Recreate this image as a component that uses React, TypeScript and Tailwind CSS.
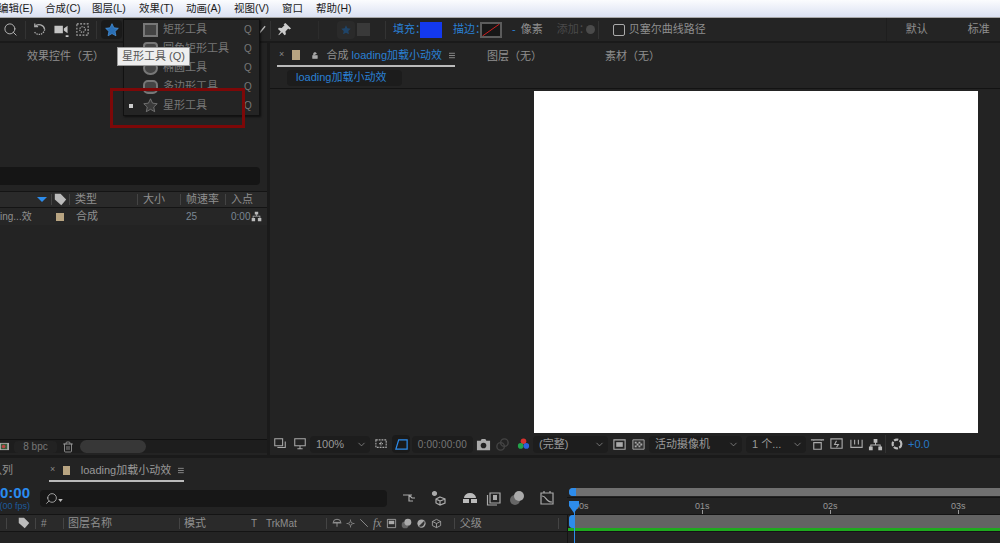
import type { ReactNode } from 'react';
import { ChevronDown, Search, Trash2 } from 'lucide-react';

const menus = [
  { label: '编辑(E)', w: 'w-[47px]' },
  { label: '合成(C)', w: 'w-[47px]' },
  { label: '图层(L)', w: 'w-[47px]' },
  { label: '效果(T)', w: 'w-[47px]' },
  { label: '动画(A)', w: 'w-[48px]' },
  { label: '视图(V)', w: 'w-[48px]' },
  { label: '窗口', w: 'w-[34px]' },
  { label: '帮助(H)', w: 'w-[48px]' },
];

const shapeItems = ['矩形工具', '圆角矩形工具', '椭圆工具', '多边形工具', '星形工具'];

const starPath = 'M12 2.5l2.9 6.2 6.6.8-4.9 4.6 1.3 6.6L12 17.4l-5.9 3.3 1.3-6.6-4.9-4.6 6.6-.8z';

function Star({ className }: { className: string }) {
  return (
    <svg viewBox="0 0 24 24" className={className}>
      <path d={starPath} />
    </svg>
  );
}

function Icon({ className, children }: { className: string; children: ReactNode }) {
  return (
    <svg viewBox="0 0 16 16" fill="none" stroke="#aaa" strokeWidth="1.2" className={`shrink-0 ${className}`}>
      {children}
    </svg>
  );
}

function Select({ label, className }: { label: string; className: string }) {
  return (
    <div className={`flex h-[17px] shrink-0 items-center justify-between rounded-sm bg-[#1d1d1d] pl-[6px] pr-[3px] text-[#9a9a9a] ${className}`}>
      <span className="whitespace-nowrap">{label}</span>
      <ChevronDown className="h-[11px] w-[11px]" strokeWidth={1.5} />
    </div>
  );
}

function HamburgerIcon({ className }: { className: string }) {
  return (
    <svg viewBox="0 0 8 7" className={`h-[7px] w-[8px] ${className}`}>
      <path d="M0 .5h8M0 3.5h8M0 6.5h8" stroke="#aaa" />
    </svg>
  );
}

function CompBar() {
  return (
    <div className="flex h-[22px] shrink-0 items-center bg-[#232323] text-[11px]">
      <Icon className="ml-[3px] h-[14px] w-[14px]"><path d="M2 2h9v8H2zM5 12h9V5" /></Icon>
      <Icon className="ml-[6px] h-[14px] w-[14px]"><path d="M2 2h12v8H2zM8 10v3M5 13.5h6" /></Icon>
      <Select label="100%" className="ml-[3px] w-[60px]" />
      <Icon className="ml-[4px] h-[15px] w-[15px]"><path d="M2 3h11v8H2zM7.5 5v4M5.5 7h4" strokeDasharray="2 1" /></Icon>
      <div className="ml-[3px] flex h-[18px] w-[18px] items-center justify-center rounded-sm bg-[#1a1a1a]">
        <svg viewBox="0 0 16 16" fill="none" stroke="#2d8ceb" strokeWidth="1.3" className="h-[15px] w-[15px]"><path d="M2 13L5 3h9v10z" /></svg>
      </div>
      <div className="ml-[2px] flex h-[17px] w-[61px] items-center justify-center rounded-sm bg-[#1d1d1d] text-[10px] tracking-[0.2px] text-[#777]">0:00:00:00</div>
      <svg viewBox="0 0 16 16" className="ml-[3px] h-[15px] w-[15px]"><path fill="#aaa" d="M1 4h4l1-2h4l1 2h4v10H1z" /><circle cx="8" cy="9" r="3" fill="#222" /></svg>
      <svg viewBox="0 0 16 16" className="ml-[4px] h-[15px] w-[15px]"><circle cx="6" cy="10" r="4" fill="none" stroke="#444" strokeWidth="1.5" /><circle cx="10" cy="6" r="4" fill="none" stroke="#444" strokeWidth="1.5" /></svg>
      <svg viewBox="0 0 16 16" className="ml-[6px] h-[15px] w-[15px]"><circle cx="8" cy="4.5" r="3" fill="#d8322e" /><circle cx="5" cy="9.5" r="3" fill="#22a34a" /><circle cx="11" cy="9.5" r="3" fill="#2c62dc" /></svg>
      <Select label="(完整)" className="ml-[2px] w-[75px]" />
      <Icon className="ml-[4px] h-[15px] w-[15px]"><path d="M2 3h12v10H2z" /><path d="M4.5 5.5h7v5h-7z" fill="#aaa" stroke="none" /></Icon>
      <svg viewBox="0 0 16 16" className="ml-[4px] h-[15px] w-[15px]"><path d="M2 3h12v10H2z" fill="#333" stroke="#aaa" /><path d="M4 5h2v2H4zM8 5h2v2H8zM6 7h2v2H6zM10 7h2v2h-2zM4 9h2v2H4zM8 9h2v2H8z" fill="#aaa" /></svg>
      <Select label="活动摄像机" className="ml-[3px] w-[93px]" />
      <Select label="1 个..." className="ml-[4px] w-[60px]" />
      <Icon className="ml-[4px] h-[15px] w-[15px]"><path d="M1 3h14M4 3v1M12 3v1M4 6h8v7H4z" /></Icon>
      <Icon className="ml-[4px] h-[15px] w-[15px]"><path d="M2 2h12v10H2zM8 4L6 8h4l-2 3" /></Icon>
      <Icon className="ml-[5px] h-[15px] w-[15px]"><path d="M2 3v8h12V3M6 3v5M10 3v5M2 11h12" /></Icon>
      <svg viewBox="0 0 16 16" fill="#bbb" className="ml-[4px] h-[15px] w-[15px]"><path d="M6 2h4v4H6zM1 10h4v4H1zM11 10h4v4h-4zM7.5 6h1v2h5v2h-1V9h-9v1h-1V8h5z" /></svg>
      <div className="ml-[2px] h-[18px] w-px bg-[#333]" />
      <svg viewBox="0 0 16 16" fill="none" stroke="#bbb" strokeWidth="2.5" className="ml-[4px] h-[14px] w-[14px]"><circle cx="8" cy="8" r="5" strokeDasharray="5 1.5" /></svg>
      <span className="ml-[4px] text-[#2578c8]">+0.0</span>
    </div>
  );
}

export default function App() {
  return (
    <div className="relative flex h-[543px] w-[1000px] flex-col overflow-hidden bg-[#1a1a1a] font-['Liberation_Sans','Noto_Sans_CJK_SC',sans-serif] text-[11px] text-[#8f8f8f]">
      {/* menu */}
      <div className="flex h-[18px] shrink-0 items-center border-b border-[#a8a8a8] bg-gradient-to-b from-[#fbfcfe] to-[#dbe1f2] text-[10.5px] text-[#1a1a1a]">
        <div className="-ml-[2px] flex">
          {menus.map((m) => (
            <span key={m.label} className={`whitespace-nowrap ${m.w}`}>{m.label}</span>
          ))}
        </div>
      </div>

      {/* toolbar */}
      <div className="flex h-[23px] shrink-0 items-center bg-[#242424]">
        <Search className="ml-[3px] h-[15px] w-[15px] text-[#bbb]" strokeWidth={1.5} />
        <div className="ml-[7px] h-[18px] w-px bg-[#333]" />
        <Icon className="ml-[6px] h-[15px] w-[15px]">
          <path d="M3 5a6 6 0 0 1 10.5 3" strokeWidth="1.4" />
          <path d="M13.5 8a6 6 0 0 1-11 2.5" strokeWidth="1.4" strokeDasharray="1.5 1" />
          <path d="M3 1.5V5h3.5" strokeWidth="1.4" />
        </Icon>
        <svg viewBox="0 0 16 16" fill="#c4c4c4" className="ml-[6px] h-[15px] w-[16px]"><path d="M1 4h9v8H1zM11 7l4-3v8l-4-3zM13 14h3v2h-3z" /></svg>
        <Icon className="ml-[6px] h-[15px] w-[15px]"><path d="M2 2h12v12H2z" strokeDasharray="2 1.5" /><circle cx="8" cy="8" r="3" strokeDasharray="1.5 1" /></Icon>
        <div className="ml-[6px] h-[18px] w-px bg-[#333]" />
        <div className="ml-[4px] flex h-[19px] w-[21px] items-center justify-center rounded-sm bg-[#1a1a1a]">
          <Star className="h-[16px] w-[16px] fill-[#2a6fb5] stroke-[#4b9be8]" />
        </div>
        <div className="ml-[135px] flex items-center">
          <svg viewBox="0 0 16 16" fill="none" stroke="#bbb" className="h-[12px] w-[10px]"><path d="M3 14L13 2" strokeWidth="2" /></svg>
          <div className="ml-[3px] h-[18px] w-px bg-[#333]" />
          <svg viewBox="0 0 16 16" fill="#ccc" className="ml-[6px] h-[15px] w-[15px]"><path d="M9 1l6 6-2 1-1-1-3 3 .5 3-1.5 1-2.5-3L2 14l-.5-.5L4 10 1 7.5 2 6l3 .5 3-3-1-1z" /></svg>
        </div>
        <div className="ml-[26px] h-[18px] w-px bg-[#2c2c2c]" />
        <div className="ml-[18px] flex h-[18px] w-[18px] items-center justify-center rounded-sm bg-[#2a2a2a]">
          <Star className="h-[12px] w-[12px] fill-[#1f4468]" />
        </div>
        <div className="ml-[2px] h-[13px] w-[13px] bg-[#393939]" />
        <div className="ml-[15px] h-[18px] w-px bg-[#333]" />
        <span className="ml-[7px] whitespace-nowrap text-[#2a80d4]">填充：</span>
        <div className="-ml-[6px] h-[16px] w-[22px] bg-[#1339f0]" />
        <span className="ml-[11px] whitespace-nowrap text-[#2a80d4]">描边：</span>
        <div className="-ml-[6px] flex h-[16px] w-[22px] items-center justify-center border-2 border-[#5c5c5c] bg-[#171717]">
          <svg viewBox="0 0 17 12" className="h-full w-full"><path d="M0 12L17 0" stroke="#d02020" strokeWidth="1" /></svg>
        </div>
        <span className="ml-[10px] text-[#2a80d4]">-</span>
        <span className="ml-[5px] whitespace-nowrap">像素</span>
        <span className="ml-[14px] whitespace-nowrap text-[#4a4a4a]">添加：</span>
        <div className="-ml-[4px] h-[9px] w-[9px] rounded-full bg-[#4a4a4a]" />
        <div className="ml-[3px] h-[18px] w-px bg-[#333]" />
        <div className="ml-[14px] h-[12px] w-[12px] rounded-[2px] border border-[#aaa]" />
        <span className="ml-[4px] whitespace-nowrap text-[#8f8f8f]">贝塞尔曲线路径</span>
        <div className="ml-[180px] h-[23px] w-px bg-[#1e1e1e]" />
        <span className="ml-[19px] whitespace-nowrap">默认</span>
        <span className="ml-[40px] whitespace-nowrap">标准</span>
      </div>

      {/* panels */}
      <div className="mt-[2px] flex h-[412px] shrink-0 gap-[3px]">
        <div className="flex w-[267px] shrink-0 flex-col bg-[#232323]">
          <div className="flex h-[24px] shrink-0 items-center pl-[27px] pt-[2px]">效果控件（无）</div>
          <div className="mt-[100px] h-[18px] w-[260px] shrink-0 rounded-r-sm bg-[#151515]" />
          <div className="mt-[6px] flex h-[17px] shrink-0 items-center border-y border-[#141414] bg-[#2a2a2a]">
            <svg viewBox="0 0 12 6" className="ml-[36px] h-[5px] w-[12px]"><path d="M0 0h12L6 6z" fill="#2d8ceb" /></svg>
            <span className="ml-[3px] h-[11px] w-px bg-[#444]" />
            <svg viewBox="0 0 16 16" fill="#bbb" className="ml-[2px] h-[13px] w-[13px]"><path d="M1 1h7l7 7-6 7-8-7z" /></svg>
            <span className="ml-[2px] h-[11px] w-px bg-[#444]" />
            <span className="ml-[5px] w-[62px]">类型</span>
            <span className="h-[11px] w-px bg-[#444]" />
            <span className="ml-[5px] w-[37px]">大小</span>
            <span className="h-[11px] w-px bg-[#444]" />
            <span className="ml-[5px] w-[39px] whitespace-nowrap">帧速率</span>
            <span className="h-[11px] w-px bg-[#444]" />
            <span className="ml-[5px] whitespace-nowrap">入点</span>
          </div>
          <div className="flex h-[17px] shrink-0 items-center bg-[#262626]">
            <span className="w-[56px] whitespace-nowrap text-[10px]">ing...效</span>
            <span className="h-[8px] w-[8px] bg-[#b8a481]" />
            <span className="ml-[12px] w-[110px]">合成</span>
            <span className="w-[45px] text-[10px] text-[#7b8794]">25</span>
            <span className="text-[10px] text-[#7b8794]">0:00</span>
            <svg viewBox="0 0 16 16" fill="#bbb" className="ml-[1px] h-[11px] w-[11px]"><path d="M5.5 1h5v4h-5zM1 10h5v5H1zM10 10h5v5h-5zM7.5 5h1v2h5v3h-1V8h-9v2h-1V7h5z" /></svg>
          </div>
          <div className="flex-1" />
          <div className="mb-[2px] flex h-[14px] shrink-0 items-center border-t border-[#111] bg-[#1d1d1d]">
            <svg viewBox="0 0 10 10" className="h-[11px] w-[9px]"><path d="M0 1h10v8H0z" fill="#aaa" /><path d="M1 2h7v6H1z" fill="#3a5a3a" /><circle cx="4" cy="5" r="2" fill="#b44" /></svg>
            <div className="ml-[5px] flex h-[12px] w-[43px] items-center justify-center rounded-sm bg-[#222] text-[10px] text-[#777]">8 bpc</div>
            <Trash2 className="ml-[5px] h-[12px] w-[12px] text-[#aaa]" strokeWidth={1.5} />
            <div className="ml-[6px] h-[13px] w-[66px] rounded-full bg-[#373737]" />
          </div>
        </div>

        <div className="flex min-w-0 flex-1 flex-col bg-[#232323]">
          <div className="flex h-[24px] shrink-0 items-center">
            <div className="ml-[7px] flex h-[24px] w-[178px] items-center border-b-2 border-[#bbb] pl-[2px] pt-[2px]">
              <span className="text-[9px] text-[#888]">×</span>
              <span className="ml-[8px] h-[10px] w-[10px] bg-[#b8a481]" />
              <svg viewBox="0 0 10 10" className="ml-[12px] h-[9px] w-[8px]"><path d="M1 5h8v5H1zM2.5 5V2.5a2.5 2.5 0 0 1 5 0" fill="#aaa" stroke="#aaa" /></svg>
              <span className="ml-[9px] whitespace-nowrap text-[#8f8f8f]">合成</span>
              <span className="ml-[3px] whitespace-nowrap text-[#2a80d4]">loading加载小动效</span>
              <HamburgerIcon className="ml-[7px]" />
            </div>
            <span className="ml-[32px] whitespace-nowrap pt-[2px]">图层（无）</span>
            <span className="ml-[63px] whitespace-nowrap pt-[2px]">素材（无）</span>
          </div>
          <div className="flex h-[22px] shrink-0 items-center border-b border-[#131313]">
            <div className="ml-[17px] flex h-[16px] w-[115px] items-center rounded-sm bg-[#1c1c1c] pl-[9px] text-[#2a80d4]">loading加载小动效</div>
          </div>
          <div className="flex min-h-0 flex-1 items-end justify-end pr-[22px]">
            <div className="h-[342px] w-[444px] bg-white" />
          </div>
          <CompBar />
        </div>
      </div>

      {/* timeline */}
      <div className="mt-[3px] flex min-h-0 flex-1 flex-col bg-[#232323]">
        <div className="flex h-[24px] shrink-0 items-center">
          <span className="-ml-[9px] w-[58px] whitespace-nowrap">队列</span>
          <div className="flex h-[24px] w-[135px] items-center border-b-2 border-[#bbb] pl-[1px] pt-[2px]">
            <span className="text-[9px] text-[#888]">×</span>
            <span className="ml-[8px] h-[9px] w-[9px] bg-[#b8a481]" />
            <span className="ml-[11px] whitespace-nowrap text-[#999]">loading加载小动效</span>
            <HamburgerIcon className="ml-[7px]" />
          </div>
        </div>
        <div className="flex h-[33px] shrink-0 border-b border-[#141414]">
          <div className="flex w-[567px] shrink-0 items-start">
            <div className="flex w-[34px] shrink-0 flex-col items-end overflow-hidden pr-[4px] pt-[3px]">
              <span className="text-[15px] font-bold leading-[16px] text-[#2a8cf0]">0:00</span>
              <span className="whitespace-nowrap text-[9px] leading-[11px] text-[#1d5a9c]">(00 fps)</span>
            </div>
            <div className="ml-[6px] mt-[8px] flex h-[17px] w-[347px] shrink-0 items-center rounded-sm bg-[#171717] pl-[5px]">
              <Search className="h-[13px] w-[13px] -scale-x-100 text-[#bbb]" strokeWidth={1.5} />
              <svg viewBox="0 0 6 4" className="mt-[3px] h-[3px] w-[5px]"><path d="M0 0h6L3 4z" fill="#bbb" /></svg>
            </div>
            <div className="ml-[15px] mt-[8px] flex items-center gap-[13px]">
              <Icon className="h-[16px] w-[16px]"><path d="M1 5h6l3 0M7 5l3 3h3M7 5v6h4" /></Icon>
              <Icon className="h-[16px] w-[16px]"><path d="M9 7l5 2v4l-5 2-4-2V9zM5 9l4 2 5-2M9 11v4" /><circle cx="3.5" cy="3.5" r="2" fill="#aaa" /></Icon>
              <svg viewBox="0 0 16 16" fill="#bbb" className="ml-[2px] h-[16px] w-[16px]"><path d="M2 8a6 5 0 0 1 12 0zM1 9h6v4H1zM9 9h6v4H9z" /></svg>
              <Icon className="-ml-[5px] h-[16px] w-[16px]"><path d="M4 3h10v10H4zM1.5 5v10H11" /><path d="M7 5h4v5H7z" fill="#aaa" stroke="none" /></Icon>
              <svg viewBox="0 0 16 16" className="-ml-[6px] h-[16px] w-[16px]"><circle cx="6" cy="10" r="5" fill="#666" /><circle cx="10" cy="6" r="5" fill="#aaa" /></svg>
              <Icon className="ml-[1px] h-[16px] w-[16px]"><path d="M2 3h12v11H2zM5 1v2M11 1v2M3 6c5 0 3 6 10 6" /></Icon>
            </div>
          </div>
          <div className="min-w-0 flex-1">
            <div className="ml-[2px] mt-[6px] h-[8px] rounded-l-full bg-[#707070]">
              <div className="h-[8px] w-[7px] rounded-l-full bg-[#2d8ceb]" />
            </div>
            <div className="mt-[1px] h-px bg-[#141414]" />
            <div className="relative h-[16px] text-[9px] text-[#999]">
              <span className="absolute left-[7px] top-[2px]">00s</span>
              <span className="absolute left-[128px] top-[2px]">01s</span>
              <span className="absolute left-[256px] top-[2px]">02s</span>
              <span className="absolute left-[384px] top-[2px]">03s</span>
              <div className="absolute bottom-0 left-[135px] h-[4px] w-px bg-[#999]" />
              <div className="absolute bottom-0 left-[263px] h-[4px] w-px bg-[#999]" />
              <div className="absolute bottom-0 left-[391px] h-[4px] w-px bg-[#999]" />
            </div>
          </div>
        </div>
        <div className="flex h-[17px] shrink-0 border-b border-[#141414]">
          <div className="flex w-[567px] shrink-0 items-center bg-[#2a2a2a]">
            <span className="ml-[6px] h-[11px] w-px bg-[#444]" />
            <svg viewBox="0 0 16 16" fill="#bbb" className="ml-[11px] h-[12px] w-[12px]"><path d="M1 1h7l7 7-6 7-8-7z" /></svg>
            <span className="ml-[5px] h-[11px] w-px bg-[#444]" />
            <span className="ml-[5px] w-[22px] text-[10px]">#</span>
            <span className="h-[11px] w-px bg-[#444]" />
            <span className="ml-[4px] w-[111px]">图层名称</span>
            <span className="h-[11px] w-px bg-[#444]" />
            <span className="ml-[4px] w-[67px]">模式</span>
            <span className="w-[15px] text-[10px]">T</span>
            <span className="w-[60px] text-[10px]">TrkMat</span>
            <span className="h-[11px] w-px bg-[#444]" />
            <span className="ml-[5px] flex items-center gap-[4px]">
              <Icon className="h-[10px] w-[10px]"><path d="M2 7a6 5 0 0 1 12 0zM1 8h14M8 8v6" /></Icon>
              <Icon className="h-[9px] w-[9px]"><circle cx="8" cy="8" r="3" /><path d="M8 1v3M8 12v3M1 8h3M12 8h3" /></Icon>
              <Icon className="h-[10px] w-[10px]"><path d="M2 2l12 12" /></Icon>
              <span className="font-['Liberation_Serif',serif] text-[12px] italic">fx</span>
              <Icon className="h-[11px] w-[11px]"><path d="M2 2h12v12H2z" /><path d="M4 4h8v5H4z" fill="#aaa" stroke="none" /></Icon>
              <svg viewBox="0 0 16 16" className="h-[11px] w-[11px]"><circle cx="6" cy="10" r="5" fill="#666" /><circle cx="10" cy="6" r="5" fill="#aaa" /></svg>
              <svg viewBox="0 0 16 16" className="h-[11px] w-[11px]"><circle cx="8" cy="8" r="6" fill="#aaa" /><path d="M8 8l4-4a6 6 0 0 1-8 8z" fill="#333" /></svg>
              <Icon className="h-[11px] w-[11px]"><path d="M8 2l6 3v6l-6 3-6-3V5zM2 5l6 3 6-3M8 8v6" /></Icon>
            </span>
            <span className="ml-[12px] h-[11px] w-px bg-[#444]" />
            <span className="ml-[5px] w-[98px]">父级</span>
            <span className="h-[11px] w-px bg-[#444]" />
          </div>
          <div className="min-w-0 flex-1 border-l border-[#141414]">
            <div className="ml-px h-[13px] rounded-l bg-[#636363]">
              <div className="h-[13px] w-[5px] rounded-l bg-[#2d8ceb]" />
            </div>
            <div className="h-[3px] bg-[#1faa1f]" />
          </div>
        </div>
        <div className="flex min-h-0 flex-1">
          <div className="w-[567px] shrink-0" />
          <div className="flex-1 border-l border-[#141414]" />
        </div>
      </div>

      {/* playhead */}
      <svg viewBox="0 0 10 12" className="absolute left-[569px] top-[501px] h-[12px] w-[10px]"><path d="M0 0h10v5L5 12 0 5z" fill="#2d8ceb" /></svg>
      <div className="absolute bottom-0 left-[574px] top-[510px] w-px bg-[#2d8ceb]" />

      {/* shape tool menu */}
      <div className="absolute left-[123px] top-[19px] flex h-[97px] w-[137px] flex-col border border-[#111] bg-[#242424] shadow-[1px_1px_2px_rgba(0,0,0,0.6)]">
        {shapeItems.map((label, i) => (
          <div key={label} className="flex h-[19.4px] items-center text-[11px]">
            <span className="flex w-[19px] justify-center">
              {i === 4 && <span className="-ml-[5px] h-[4px] w-[4px] bg-[#ccc]" />}
            </span>
            <span className="flex h-[15px] w-[15px] items-center justify-center">
              {i === 4 && <Star className="h-[17px] w-[17px] shrink-0 fill-[#3a3a3a] stroke-[#888]" />}
              {i === 0 && <span className="h-[14px] w-[15px] border-2 border-[#777] bg-[#444]" />}
              {i === 1 && <span className="h-[14px] w-[15px] rounded-[4px] border-2 border-[#777] bg-[#444]" />}
              {i === 2 && <span className="h-[14px] w-[15px] rounded-full border-2 border-[#777] bg-[#444]" />}
              {i === 3 && <span className="h-[14px] w-[15px] rounded-[5px] border-2 border-[#777] bg-[#444]" />}
            </span>
            <span className="ml-[5px] w-[81px] whitespace-nowrap text-[#777]">{label}</span>
            <span className="text-[10px] text-[#777]">Q</span>
          </div>
        ))}
      </div>

      {/* tooltip */}
      <div className="absolute left-[117px] top-[47px] flex h-[19px] items-center whitespace-nowrap border border-[#999] bg-[#eeeeee] px-[4px] text-[11px] text-[#555]">星形工具 (Q)</div>

      {/* red highlight */}
      <div className="absolute left-[110px] top-[88px] h-[40px] w-[135px] border-[3px] border-[#7d0808]" />
    </div>
  );
}
